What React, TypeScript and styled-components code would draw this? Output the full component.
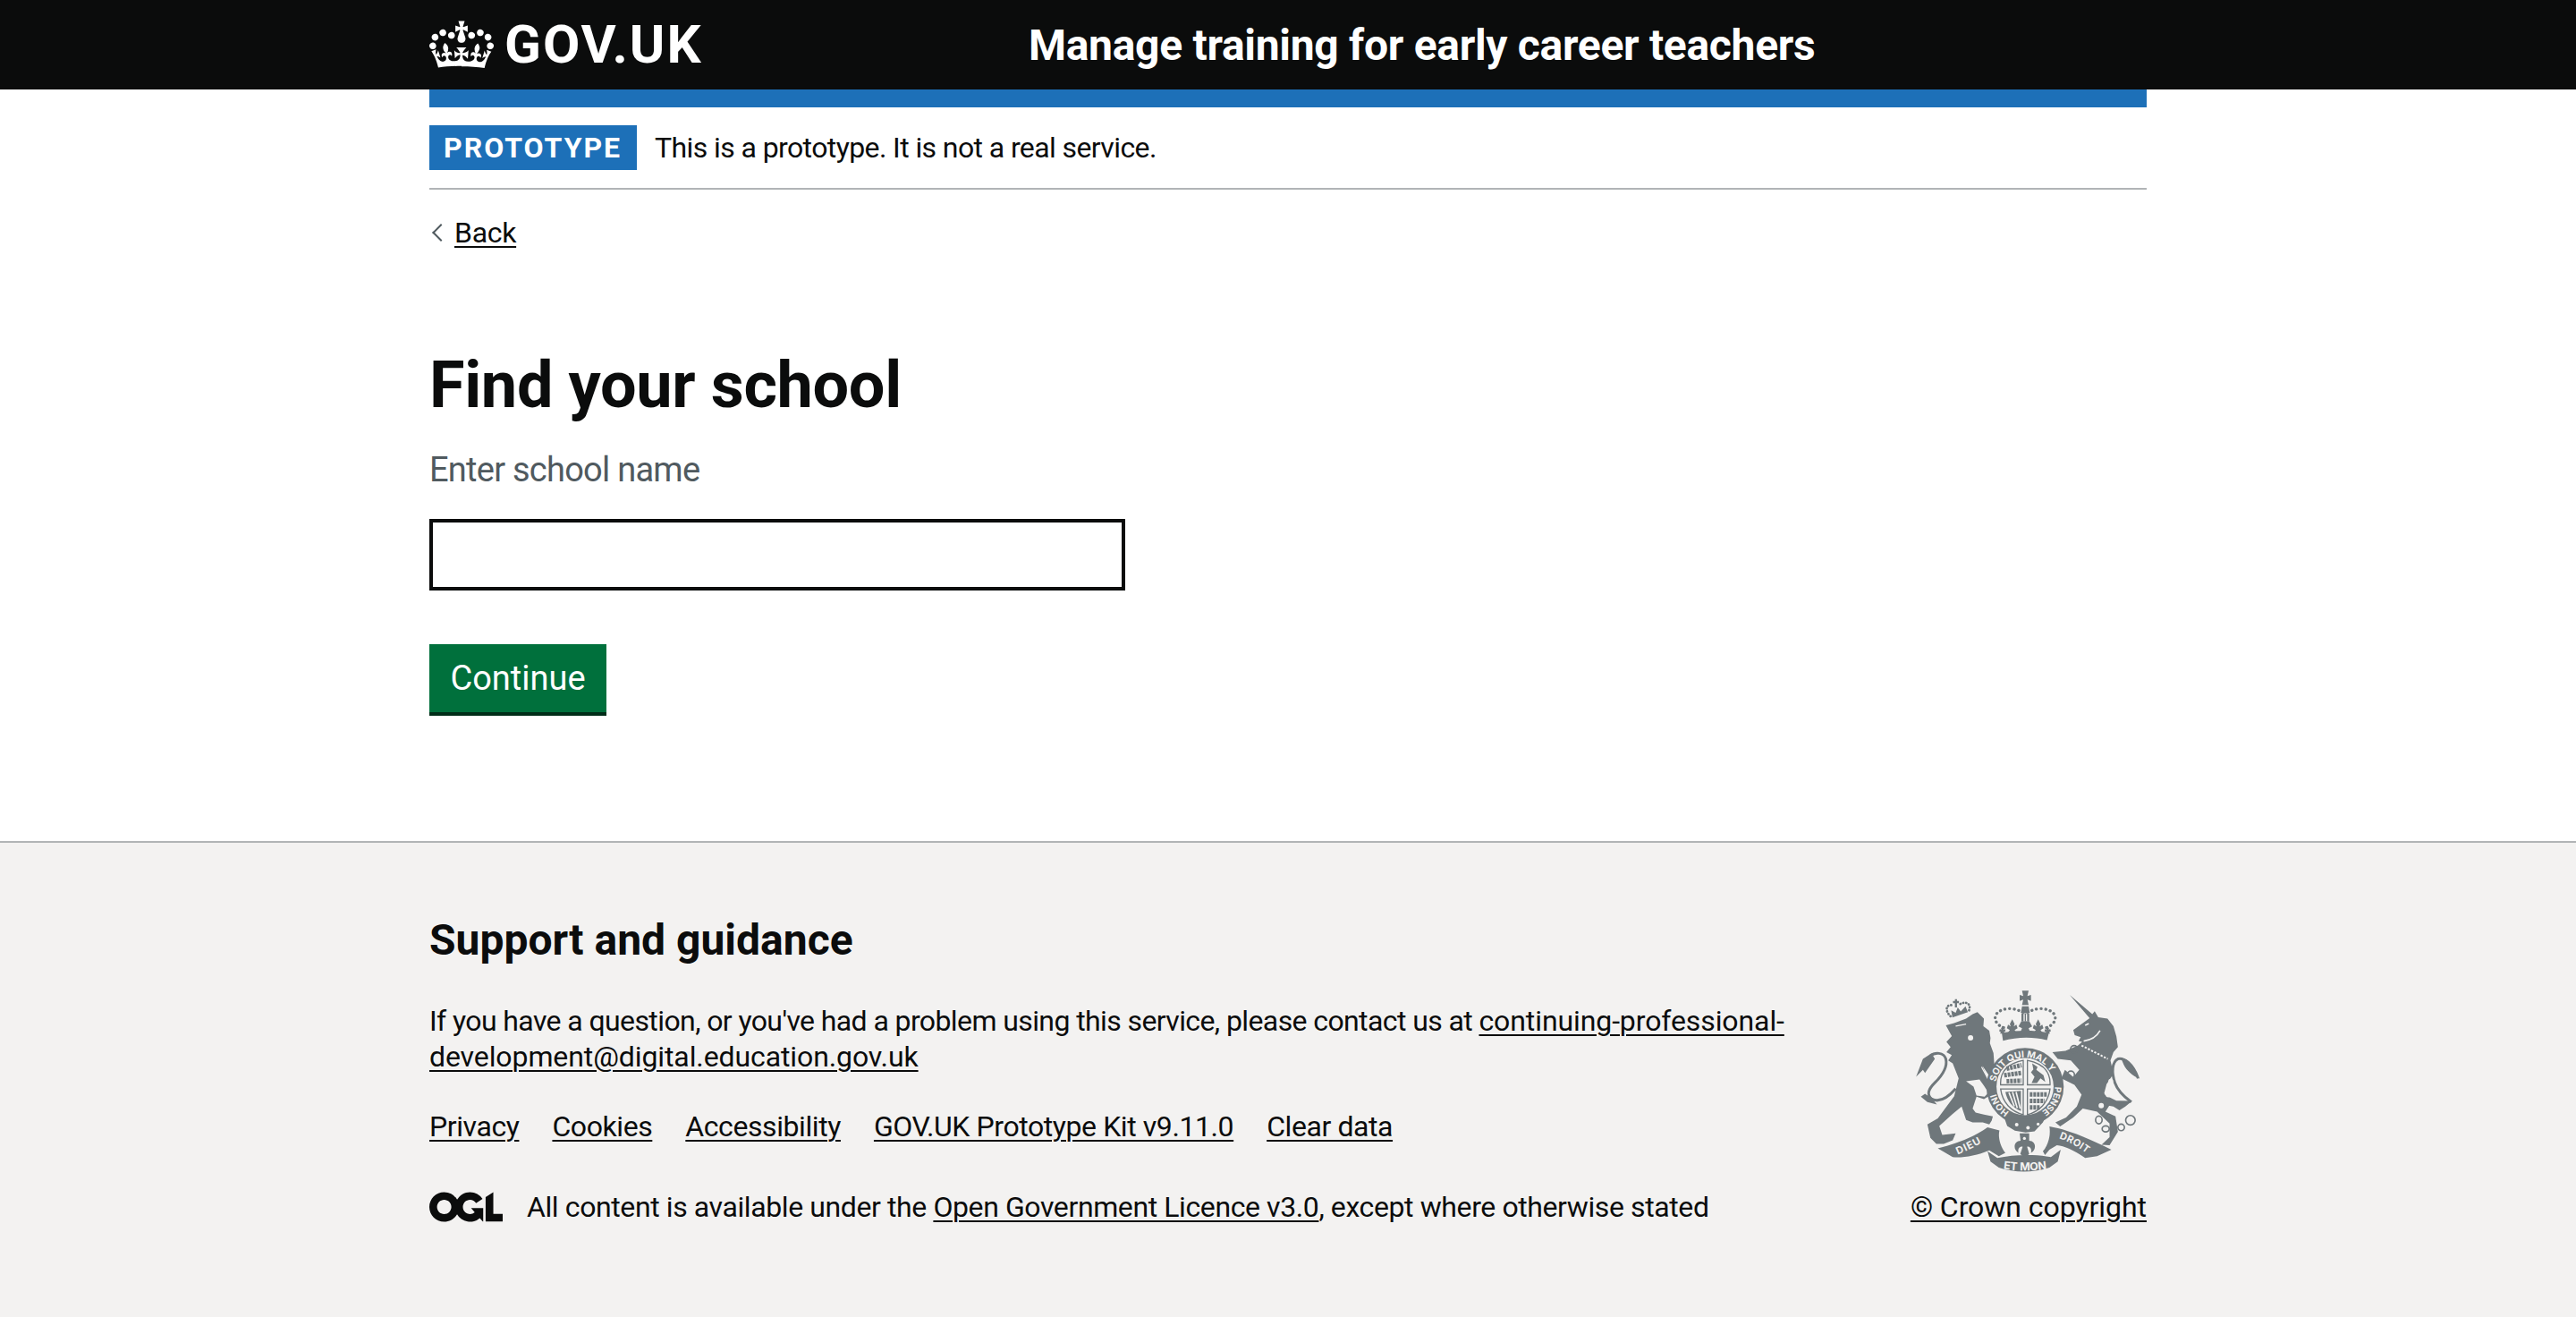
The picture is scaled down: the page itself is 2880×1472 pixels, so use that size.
import React from 'react';
import styled, { createGlobalStyle } from 'styled-components';

const GlobalStyle = createGlobalStyle`
    html, body {
        margin: 0;
        padding: 0;
        background: #fff;
        color: #0b0c0c;
        font-family: Roboto, Arial, sans-serif;
    }
`;

const CROWN_PATH = "M25 30.2c3.5 1.5 7.7-.2 9.1-3.7 1.5-3.6-.2-7.8-3.9-9.2-3.6-1.4-7.6.3-9.1 3.9-1.4 3.5.3 7.5 3.9 9zM9 39.5c3.6 1.5 7.8-.2 9.2-3.7 1.5-3.6-.2-7.8-3.9-9.1-3.6-1.5-7.6.2-9.1 3.8-1.4 3.5.3 7.5 3.8 9zM4.4 57.2c3.5 1.5 7.7-.2 9.1-3.8 1.5-3.6-.2-7.7-3.9-9.1-3.5-1.5-7.6.3-9.1 3.8-1.4 3.5.3 7.6 3.9 9.1zm38.3-21.4c3.5 1.5 7.7-.2 9.1-3.8 1.5-3.6-.2-7.7-3.9-9.1-3.6-1.5-7.6.3-9.1 3.8-1.3 3.6.4 7.7 3.9 9.1zm64.4-5.6c-3.6 1.5-7.8-.2-9.1-3.7-1.5-3.6.2-7.8 3.8-9.2 3.6-1.4 7.7.3 9.2 3.9 1.3 3.5-.4 7.5-3.9 9zm15.9 9.3c-3.6 1.5-7.7-.2-9.1-3.7-1.5-3.6.2-7.8 3.7-9.1 3.6-1.5 7.7.2 9.2 3.8 1.5 3.5-.3 7.5-3.8 9zm4.7 17.7c-3.6 1.5-7.8-.2-9.2-3.8-1.5-3.6.2-7.7 3.9-9.1 3.6-1.5 7.7.3 9.2 3.8 1.3 3.5-.4 7.6-3.9 9.1zM89.3 35.8c-3.6 1.5-7.8-.2-9.2-3.8-1.4-3.6.2-7.7 3.9-9.1 3.6-1.5 7.7.3 9.2 3.8 1.4 3.6-.3 7.7-3.9 9.1zM69.7 17.7l8.9 4.7V9.3l-8.9 2.8c-.2-.3-.5-.6-.9-.9L72.4 0H59.6l3.5 11.2c-.3.3-.6.5-.9.9l-8.8-2.8v13.1l8.8-4.7c.3.3.6.7.9.9l-5 15.4v.1c-.2.8-.4 1.6-.4 2.4 0 4.1 3.1 7.5 7 8.1h.2c.3 0 .7.1 1 .1.4 0 .7 0 1-.1h.2c4-.6 7.1-4.1 7.1-8.1 0-.8-.1-1.7-.4-2.4V34l-5.1-15.4c.4-.2.7-.6 1-.9zM66 92.8c16.9 0 32.8 1.1 47.1 3.2 4-16.9 8.9-26.7 14-33.5l-9.6-3.4c1 4.9 1.1 7.2 0 10.2-1.5-1.4-3-4.3-4.2-8.7L108.6 76c2.8-2 5-3.2 7.5-3.3-4.4 9.4-10 11.9-13.6 11.2-4.3-.8-6.3-4.6-5.6-7.9 1-4.7 5.7-5.9 8-.5 4.3-8.7-3-11.4-7.6-8.8 7.1-7.2 7.9-13.5 2.1-21.1-8 6.1-8.1 12.3-4.5 20.8-4.7-5.4-12.1-2.5-9.5 6.2 3.4-5.2 7.9-2 7.2 3.1-.6 4.3-6.4 7.8-13.5 7.2-10.3-.9-10.9-8-11.2-13 2.5-.5 7.1 1.8 11 7.3L80.2 60c-4.1 4.4-8 5.3-12.3 5.4 1.4-4.4 8-11.6 8-11.6H55.5s6.4 7.2 7.9 11.6c-4.2-.1-8-1-12.3-5.4l1.4 16.4c3.9-5.5 8.5-7.7 10.9-7.3-.3 5-.9 12.1-11.1 13-7.2.6-12.9-2.9-13.5-7.2-.7-5 3.8-8.3 7.1-3.1 2.7-8.7-4.6-11.6-9.4-6.2 3.7-8.5 3.6-14.7-4.6-20.8-5.8 7.6-5 13.9 2.2 21.1-4.7-2.6-11.9.1-7.7 8.8 2.3-5.5 7.1-4.2 8.1.5.7 3.3-1.3 7.1-5.7 7.9-3.5.7-9-1.8-13.5-11.2 2.5.1 4.7 1.3 7.5 3.3l-4.7-15.4c-1.2 4.4-2.7 7.2-4.3 8.7-1.1-3-.9-5.3 0-10.2l-9.5 3.4c5 6.9 9.9 16.7 14 33.5 14.8-2.1 30.8-3.2 47.7-3.2z";

const OGL_PATH = "M421.5 142.8V.1l-50.7 32.3v161.1h112.4v-50.7zm-122.3-9.6A47.12 47.12 0 0 1 221 97.8c0-26 21.1-47.1 47.1-47.1 16.7 0 31.4 8.7 39.7 21.8l42.7-27.2A97.63 97.63 0 0 0 268.1 0c-36.5 0-68.3 20.1-85.1 49.7A98 98 0 0 0 97.8 0C43.9 0 0 43.9 0 97.8s43.9 97.8 97.8 97.8c36.5 0 68.3-20.1 85.1-49.7a97.76 97.76 0 0 0 149.6 25.4l19.4 22.2h3v-87.8h-80l24.3 27.5zM97.8 145c-26 0-47.1-21.1-47.1-47.1s21.1-47.1 47.1-47.1 47.2 21 47.2 47S123.8 145 97.8 145";

const CREST = '#6f777b';
const PAPER = '#f3f2f1';
const FLEUR = "M0 -44 L8 -28 L5 -20 L14 -26 L18 -14 L8 -8 L14 0 H-14 L-8 -8 L-18 -14 L-14 -26 L-5 -20 L-8 -28 Z";

// traced by hand from the footer artwork, coordinates are 3x crop pixels
const Crest = () => (
    <CrestSvg viewBox="60 40 780 640" xmlns="http://www.w3.org/2000/svg">
        <defs>
            <path id="garter-top" d="M 340 362 A 100 100 0 0 1 538 372" />
            <path id="garter-right" d="M 538 378 A 100 100 0 0 1 490 464" />
            <path id="garter-left" d="M 385 463 A 100 100 0 0 1 338 378" />
            <path id="scroll-left" d="M 212 606 Q 265 585 318 552" />
            <path id="scroll-mid" d="M 350 652 Q 438 668 526 652" />
            <path id="scroll-right" d="M 552 552 Q 605 570 658 612" />
        </defs>

        {/* lion */}
        <path fill={CREST} d="M172 172 L200 165 L240 150 L262 135 L278 128 L300 150 L298 175 L318 190 L322 215 L320 232 L332 265 L336 320 L320 345 L295 308 L318 370 L345 410 L330 428 L316 410 L300 420 L275 412 L262 452 L272 465 L300 472 L330 478 L326 492 L318 505 L296 498 L262 498 L240 490 L225 445 L195 470 L150 510 L160 540 L205 535 L195 558 L165 570 L140 570 L120 550 L110 505 L145 485 L200 410 L215 350 L195 300 L180 290 L192 272 L174 262 L188 245 L174 228 L192 208 Z" />
        <path fill={PAPER} d="M240 360 L285 354 L300 375 L315 398 L302 412 L275 408 L265 378 Z" />
        <path fill="none" stroke={CREST} strokeWidth="9" d="M205 385 C175 420 150 432 125 420 C105 405 115 385 135 365 C165 335 178 310 172 285 C165 262 135 262 120 275" />
        <path fill={CREST} d="M124 266 L95 285 L72 345 L95 322 L102 332 L135 285 Z M102 402 L88 412 L110 430 L142 438 L125 418 Z" />
        <circle cx="255" cy="214" r="9" fill={PAPER} />
        <path fill="none" stroke={PAPER} strokeWidth="4" d="M205 175 L240 168 M292 312 L318 360" />
        <path fill="none" stroke={CREST} strokeWidth="8" strokeDasharray="1 9" strokeLinecap="round" d="M188 142 C165 120 175 98 198 106 M250 122 C258 98 238 90 218 102" />
        <path fill="none" stroke={CREST} strokeWidth="7" d="M206 84 V112 M196 94 H216" />
        <path fill={CREST} d="M190 122 L205 130 L212 112 L222 126 L238 108 L246 128 L194 146 Z" />

        {/* unicorn */}
        <path fill={CREST} d="M588 70 L664 135 L672 125 L684 145 L715 150 L735 175 L745 210 L750 245 L735 262 L725 290 L735 335 L712 370 L704 400 L722 440 L708 462 L742 478 L750 530 L722 575 L695 573 L722 548 L722 502 L680 462 L632 452 L600 482 L556 512 L540 498 L576 482 L612 445 L628 405 L604 372 L560 350 L572 322 L600 346 L620 322 L592 290 L548 285 L530 262 L574 258 L616 240 L630 228 L618 225 L625 212 L605 205 L600 188 L625 170 L655 148 Z" />
        <path fill="none" stroke={PAPER} strokeWidth="5" d="M635 225 C660 222 680 208 690 190 M640 172 L652 166" />
        <path fill="none" stroke={PAPER} strokeWidth="6" strokeDasharray="7 5" d="M628 240 L716 285" />
        <path fill="none" stroke={CREST} strokeWidth="9" d="M818 350 C800 300 770 280 750 285 C730 295 728 330 740 365 C750 395 775 415 795 430" />
        <path fill={CREST} d="M760 282 C790 285 810 320 822 352 C798 340 780 325 770 305 Z M704 405 L745 425 L798 426 L775 445 L755 458 L735 445 L710 440 Z" />
        <g fill={PAPER}>
            <circle cx="718" cy="405" r="9" />
            <circle cx="694" cy="442" r="9" />
            <circle cx="726" cy="360" r="8" />
        </g>
        <g fill="none" stroke={CREST} strokeWidth="5">
            <circle cx="603" cy="252" r="12" />
            <circle cx="592" cy="338" r="12" />
            <ellipse cx="686" cy="490" rx="11" ry="13" />
            <ellipse cx="709" cy="520" rx="12" ry="10" />
            <circle cx="761" cy="515" r="11" />
            <circle cx="792" cy="491" r="16" />
        </g>

        {/* royal crown */}
        <path fill={CREST} d="M360 198 C410 188 470 188 518 198 L512 222 C470 210 410 210 364 224 Z" />
        <path fill={CREST} d={FLEUR} transform="translate(395 196)" />
        <path fill={CREST} d={FLEUR} transform="translate(482 196)" />
        <path fill={CREST} d={FLEUR} transform="translate(362 200) scale(0.6)" />
        <path fill={CREST} d={FLEUR} transform="translate(514 200) scale(0.6)" />
        <path fill={CREST} d="M426 158 H452 L462 176 L450 182 L456 196 H422 L428 182 L416 176 Z" />
        <path fill={CREST} d="M420 70 L432 74 L428 56 H450 L446 74 L458 70 V90 L446 86 L450 104 H428 L432 86 L420 90 Z M424 130 H454 L450 108 H428 Z M426 132 H452 V158 H426 Z" />
        <path fill="none" stroke={CREST} strokeWidth="10" strokeLinecap="round" strokeDasharray="0.5 15" d="M366 180 C326 165 325 120 385 116 C405 116 420 124 432 128 M510 180 C552 165 552 120 492 116 C472 116 458 124 446 128" />
        <path fill={PAPER} d="M433 134 h4 v24 h-4 z M441 134 h4 v24 h-4 z" />

        {/* shield in its garter */}
        <circle cx="438" cy="378" r="130" fill={CREST} />
        <circle cx="438" cy="378" r="96" fill={PAPER} />
        <path fill={CREST} d="M368 482 L400 486 L470 486 L506 482 L498 498 L470 528 L440 532 L404 526 L378 510 Z" />
        <g fill={PAPER}>
            <circle cx="410" cy="506" r="6" />
            <circle cx="448" cy="516" r="6" />
            <circle cx="482" cy="504" r="5" />
        </g>
        <g fill={PAPER} fontFamily="Inter, sans-serif" fontWeight="700">
            <text fontSize="31"><textPath href="#garter-top">SOIT QUI MAL Y</textPath></text>
            <text fontSize="30"><textPath href="#garter-right">PENSE</textPath></text>
            <text fontSize="30"><textPath href="#garter-left">HONI</textPath></text>
        </g>
        <path fill="none" stroke={CREST} strokeWidth="4" d="M356 372 C354 335 372 302 432 290 V372 Z M446 290 C506 302 524 335 522 372 H446 Z M432 386 V472 C392 462 362 432 356 386 Z M446 386 H522 C516 432 486 462 446 472 Z" />
        <g fill="none" stroke={CREST} strokeWidth="15" strokeDasharray="9 3">
            <path d="M376 318 L426 306" />
            <path d="M368 340 L426 332" />
            <path d="M376 360 L426 358" />
            <path d="M454 404 H512" />
            <path d="M454 426 H504" />
            <path d="M454 448 H490" />
        </g>
        <path fill={CREST} d="M462 300 L480 312 L476 322 L500 340 L506 362 L490 350 L478 366 H460 L470 345 L458 330 L466 320 Z" />
        <path fill={CREST} d="M372 396 L424 392 L424 460 C395 448 378 426 372 396 Z" />
        <path fill="none" stroke={PAPER} strokeWidth="5" d="M384 398 L402 444 M396 396 L412 450 M408 396 L422 452" />

        {/* motto scroll */}
        <path fill={CREST} d="M145 585 C210 570 270 545 312 515 L352 525 C345 555 362 590 372 600 L350 612 L318 592 C275 610 230 618 195 615 Z" />
        <path fill={CREST} d="M520 512 C580 522 660 555 728 590 L680 612 L640 618 C600 590 570 578 545 575 L520 590 L505 608 L498 595 C515 575 525 545 520 512 Z" />
        <path fill={CREST} d="M312 595 L345 618 C400 605 480 605 525 615 L558 590 L548 630 L520 650 C470 668 400 668 350 650 L322 630 Z" />
        <path fill={CREST} d="M420 535 H452 V560 C475 560 478 590 458 600 C462 585 452 578 445 580 L452 604 L437 618 L422 604 L430 580 C422 578 412 585 416 600 C396 590 400 560 423 560 Z" />
        <circle cx="436" cy="552" r="5" fill={PAPER} />
        <g fill={PAPER} fontFamily="Inter, sans-serif" fontWeight="700">
            <text fontSize="34" letterSpacing="3"><textPath href="#scroll-left">DIEU</textPath></text>
            <text fontSize="37"><textPath href="#scroll-mid" startOffset="50%" textAnchor="middle">ET MON</textPath></text>
            <text fontSize="33" letterSpacing="1"><textPath href="#scroll-right">DROIT</textPath></text>
        </g>
    </CrestSvg>
);

const App = () => {
    return (
        <Page>
            <GlobalStyle />
            <Header>
                <HeaderInner>
                    <Logo href="#">
                        <svg xmlns="http://www.w3.org/2000/svg" viewBox="0 0 132 97" width="72" height="60">
                            <path fill="currentColor" fillRule="evenodd" d={CROWN_PATH} />
                        </svg>
                        <LogoText>GOV.UK</LogoText>
                    </Logo>
                    <ServiceName href="#">Manage training for early career teachers</ServiceName>
                </HeaderInner>
            </Header>
            <Container>
                <PhaseBanner>
                    <PhaseTag>Prototype</PhaseTag>
                    <PhaseText>This is a prototype. It is not a real service.</PhaseText>
                </PhaseBanner>
                <BackLink href="#">Back</BackLink>
                <Main>
                    <Heading>Find your school</Heading>
                    <Hint>Enter school name</Hint>
                    <TextInput type="text" />
                    <Button>Continue</Button>
                </Main>
            </Container>
            <Footer>
                <FooterInner>
                    <FooterMeta>
                        <FooterHeading>Support and guidance</FooterHeading>
                        <FooterText>
                            If you have a question, or you've had a problem using this service, please contact us at{' '}
                            <EmailLink href="#">continuing-professional-development@digital.education.gov.uk</EmailLink>
                        </FooterText>
                        <MetaLinks>
                            <FooterLink href="#">Privacy</FooterLink>
                            <FooterLink href="#">Cookies</FooterLink>
                            <FooterLink href="#">Accessibility</FooterLink>
                            <FooterLink href="#">GOV.UK Prototype Kit v9.11.0</FooterLink>
                            <FooterLink href="#">Clear data</FooterLink>
                        </MetaLinks>
                        <Licence>
                            <svg xmlns="http://www.w3.org/2000/svg" viewBox="0 0 483.2 195.7" width="82" height="34">
                                <path fill="currentColor" d={OGL_PATH} />
                            </svg>
                            <span>
                                All content is available under the <FooterLink href="#">Open Government Licence v3.0</FooterLink>, except where otherwise stated
                            </span>
                        </Licence>
                    </FooterMeta>
                    <Copyright>
                        <Crest />
                        <FooterLink href="#">© Crown copyright</FooterLink>
                    </Copyright>
                </FooterInner>
            </Footer>
        </Page>
    );
};

const Page = styled.div`
    min-height: 1472px;
    display: flex;
    flex-direction: column;
`;

const Header = styled.header`
    background-color: #0b0c0c;
    height: 100px;
    flex-shrink: 0;
`;

const HeaderInner = styled.div`
    width: 1920px;
    margin: 0 auto;
    height: 100%;
    display: flex;
    align-items: center;
`;

const Logo = styled.a`
    width: 670px;
    display: flex;
    align-items: center;
    gap: 12px;
    color: #fff;
    text-decoration: none;
`;

const LogoText = styled.span`
    font-size: 60px;
    font-weight: 700;
    line-height: 60px;
    letter-spacing: 2px;
`;

const ServiceName = styled.a`
    color: #fff;
    text-decoration: none;
    font-size: 48px;
    font-weight: 700;
    letter-spacing: -0.3px;
`;

const Container = styled.div`
    width: 1920px;
    margin: 0 auto;
    border-top: 20px solid #1d70b8;
    flex: 1;
`;

const PhaseBanner = styled.div`
    display: flex;
    align-items: center;
    gap: 20px;
    height: 90px;
    border-bottom: 2px solid #b1b4b6;
`;

const PhaseTag = styled.strong`
    background-color: #1d70b8;
    color: #fff;
    font-size: 32px;
    font-weight: 700;
    line-height: 50px;
    letter-spacing: 2px;
    padding: 0 17px 0 16px;
    text-transform: uppercase;
`;

const PhaseText = styled.span`
    font-size: 32px;
    letter-spacing: -0.6px;
`;

const BackLink = styled.a`
    display: inline-block;
    position: relative;
    margin-top: 28px;
    padding-left: 28px;
    font-size: 32px;
    line-height: 40px;
    letter-spacing: -0.3px;
    color: #0b0c0c;
    text-decoration: underline;
    text-decoration-thickness: 2px;
    text-underline-offset: 4px;

    &::before {
        content: '';
        position: absolute;
        left: 6px;
        top: 13px;
        width: 14px;
        height: 14px;
        box-sizing: border-box;
        border-left: 2px solid #505a5f;
        border-bottom: 2px solid #505a5f;
        transform: rotate(45deg);
    }
`;

const Main = styled.main`
    padding-top: 111px;
    display: flex;
    flex-direction: column;
    align-items: flex-start;
`;

const Heading = styled.h1`
    margin: 0;
    font-size: 72px;
    font-weight: 700;
    line-height: 80px;
    letter-spacing: -0.35px;
`;

const Hint = styled.div`
    margin-top: 29px;
    font-size: 38px;
    line-height: 50px;
    letter-spacing: -0.75px;
    color: #505a5f;
`;

const TextInput = styled.input`
    box-sizing: border-box;
    margin-top: 30px;
    width: 778px;
    height: 80px;
    border: 4px solid #0b0c0c;
    border-radius: 0;
    background: #fff;
    outline: none;
`;

const Button = styled.button`
    box-sizing: border-box;
    margin-top: 60px;
    height: 76px;
    width: 198px;
    padding: 0;
    border: none;
    border-radius: 0;
    background-color: #00703c;
    box-shadow: 0 4px 0 #002d18;
    color: #fff;
    font-family: inherit;
    font-size: 38px;
`;

const Footer = styled.footer`
    box-sizing: border-box;
    height: 532px;
    flex-shrink: 0;
    background-color: #f3f2f1;
    border-top: 2px solid #b1b4b6;
`;

const FooterInner = styled.div`
    width: 1920px;
    margin: 0 auto;
    display: flex;
    justify-content: space-between;
    align-items: flex-end;
    height: 100%;
    box-sizing: border-box;
    padding-bottom: 103px;
    font-size: 32px;
    line-height: 40px;
    letter-spacing: -0.6px;
`;

const FooterMeta = styled.div`
    width: 1530px;
`;

const FooterHeading = styled.h2`
    margin: 0;
    font-size: 48px;
    font-weight: 700;
    line-height: 50px;
    letter-spacing: 0;
`;

const FooterText = styled.p`
    margin: 45px 0 0;
`;

const FooterLink = styled.a`
    color: #0b0c0c;
    text-decoration: underline;
    text-decoration-thickness: 2px;
    text-underline-offset: 4px;
`;

const EmailLink = styled(FooterLink)`
    letter-spacing: -0.1px;
`;

const MetaLinks = styled.div`
    display: flex;
    gap: 37px;
    margin-top: 38px;
    letter-spacing: -0.42px;
`;

const Licence = styled.div`
    display: flex;
    align-items: center;
    gap: 27px;
    margin-top: 50px;
    letter-spacing: -0.4px;
`;

const Copyright = styled.div`
    display: flex;
    flex-direction: column;
    align-items: center;
    gap: 14px;
    white-space: nowrap;
    letter-spacing: -0.05px;
`;

const CrestSvg = styled.svg`
    width: 260px;
    height: 213px;
`;

export default App;
